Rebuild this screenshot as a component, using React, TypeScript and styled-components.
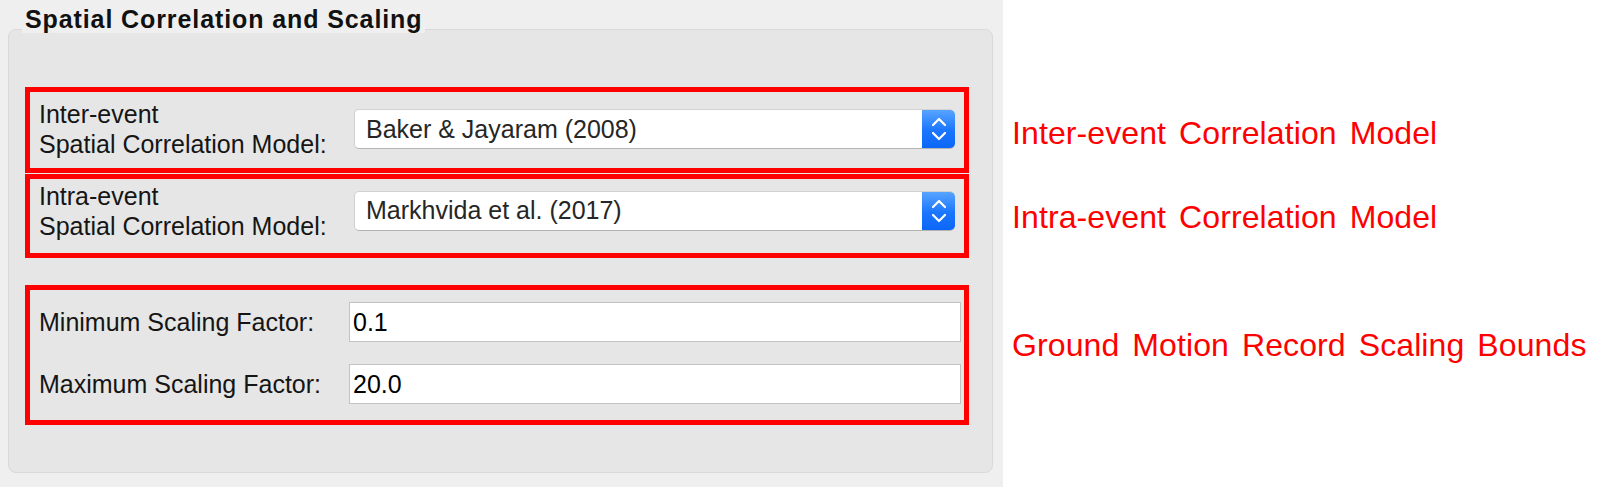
import React from "react";
import styled, { createGlobalStyle } from "styled-components";

const Global = createGlobalStyle`
  html, body { margin: 0; padding: 0; background: #ffffff; }
  body { font-family: "Liberation Sans", Arial, sans-serif; }
  * { box-sizing: border-box; }
`;

const Page = styled.div`
  display: flex;
  width: 1608px;
  height: 487px;
  background: #ffffff;
`;

const Panel = styled.div`
  width: 1003px;
  height: 487px;
  background: #efefef;
  padding: 29px 0 0 8px;
`;

const GroupBox = styled.section`
  position: relative;
  width: 985px;
  height: 444px;
  border: 1px solid #d9d9d9;
  border-radius: 8px;
  background: #e6e6e6;
  padding: 57px 23px 0 16px;
  display: flex;
  flex-direction: column;
`;

const Legend = styled.h2`
  position: absolute;
  top: -30px;
  left: 13px;
  margin: 0;
  height: 33px;
  padding: 5px 3px 0 3px;
  background: #efefef;
  font-family: "Liberation Sans", Arial, sans-serif;
  font-weight: 700;
  font-size: 25px;
  line-height: 28px;
  letter-spacing: 0.9px;
  color: #111111;
  white-space: nowrap;
`;

const RedBox = styled.div<{ $h: number; $mt: number; $pb: number }>`
  height: ${(p) => p.$h}px;
  margin-top: ${(p) => p.$mt}px;
  border: 5px solid #ff0000;
  padding: 0 9px ${(p) => p.$pb}px 9px;
  display: flex;
  align-items: center;
`;

const FieldsBox = styled.div`
  height: 140px;
  margin-top: 27px;
  border: 5px solid #ff0000;
  padding: 12px 3px 0 9px;
  display: flex;
  flex-direction: column;
  gap: 22px;
`;

const Row = styled.div`
  display: flex;
  align-items: center;
  width: 100%;
`;

const Label = styled.div<{ $w: number }>`
  flex: 0 0 ${(p) => p.$w}px;
  font-size: 25px;
  line-height: 30px;
  color: #151515;
  white-space: nowrap;
`;

const Combo = styled.div`
  flex: 0 0 601px;
  height: 40px;
  display: flex;
  align-items: stretch;
  background: #ffffff;
  border-radius: 5px;
  border-top: 1px solid #d2d2d2;
  border-bottom: 1px solid #b3b3b3;
  border-left: 1px solid #cfcfcf;
  overflow: hidden;
`;

const ComboText = styled.div`
  flex: 1;
  padding-left: 11px;
  display: flex;
  align-items: center;
  font-size: 25px;
  color: #262626;
  white-space: nowrap;
`;

const Stepper = styled.div`
  flex: 0 0 33px;
  margin: -1px 0;
  background: linear-gradient(#5aa6ff, #1a75ff 55%, #0a66f5);
  border-radius: 0 5px 5px 0;
  display: flex;
  align-items: center;
  justify-content: center;
`;

const Input = styled.div`
  flex: 0 0 612px;
  height: 40px;
  background: #ffffff;
  border: 1px solid #c2c2c2;
  padding-left: 3px;
  display: flex;
  align-items: center;
  font-size: 25px;
  color: #000000;
`;

const Notes = styled.div`
  display: flex;
  flex-direction: column;
  padding: 115px 0 0 9px;
`;

const Note = styled.div<{ $mt: number }>`
  margin-top: ${(p) => p.$mt}px;
  font-family: "Liberation Sans", Arial, sans-serif;
  font-size: 32px;
  line-height: 36px;
  letter-spacing: 0.1px;
  word-spacing: 4px;
  color: #ff0000;
  white-space: nowrap;
`;

const Chevrons = () => (
  <svg width="16" height="26" viewBox="0 0 16 26" fill="none">
    <path d="M2 9 L8 3 L14 9" stroke="#ffffff" strokeWidth="2.2" strokeLinecap="round" strokeLinejoin="round" />
    <path d="M2 17 L8 23 L14 17" stroke="#ffffff" strokeWidth="2.2" strokeLinecap="round" strokeLinejoin="round" />
  </svg>
);

const ModelRow = ({ first, value }: { first: string; value: string }) => (
  <Row>
    <Label $w={315}>
      {first}
      <br />
      Spatial Correlation Model:
    </Label>
    <Combo>
      <ComboText>{value}</ComboText>
      <Stepper>
        <Chevrons />
      </Stepper>
    </Combo>
  </Row>
);

export default function App() {
  return (
    <>
      <Global />
      <Page>
        <Panel>
          <GroupBox>
            <Legend>Spatial Correlation and Scaling</Legend>
            <RedBox $h={86} $mt={0} $pb={2}>
              <ModelRow first="Inter-event" value="Baker & Jayaram (2008)" />
            </RedBox>
            <RedBox $h={84} $mt={1} $pb={11}>
              <ModelRow first="Intra-event" value="Markhvida et al. (2017)" />
            </RedBox>
            <FieldsBox>
              <Row>
                <Label $w={310}>Minimum Scaling Factor:</Label>
                <Input>0.1</Input>
              </Row>
              <Row>
                <Label $w={310}>Maximum Scaling Factor:</Label>
                <Input>20.0</Input>
              </Row>
            </FieldsBox>
          </GroupBox>
        </Panel>
        <Notes>
          <Note $mt={0}>Inter-event Correlation Model</Note>
          <Note $mt={48}>Intra-event Correlation Model</Note>
          <Note $mt={92}>Ground Motion Record Scaling Bounds</Note>
        </Notes>
      </Page>
    </>
  );
}
